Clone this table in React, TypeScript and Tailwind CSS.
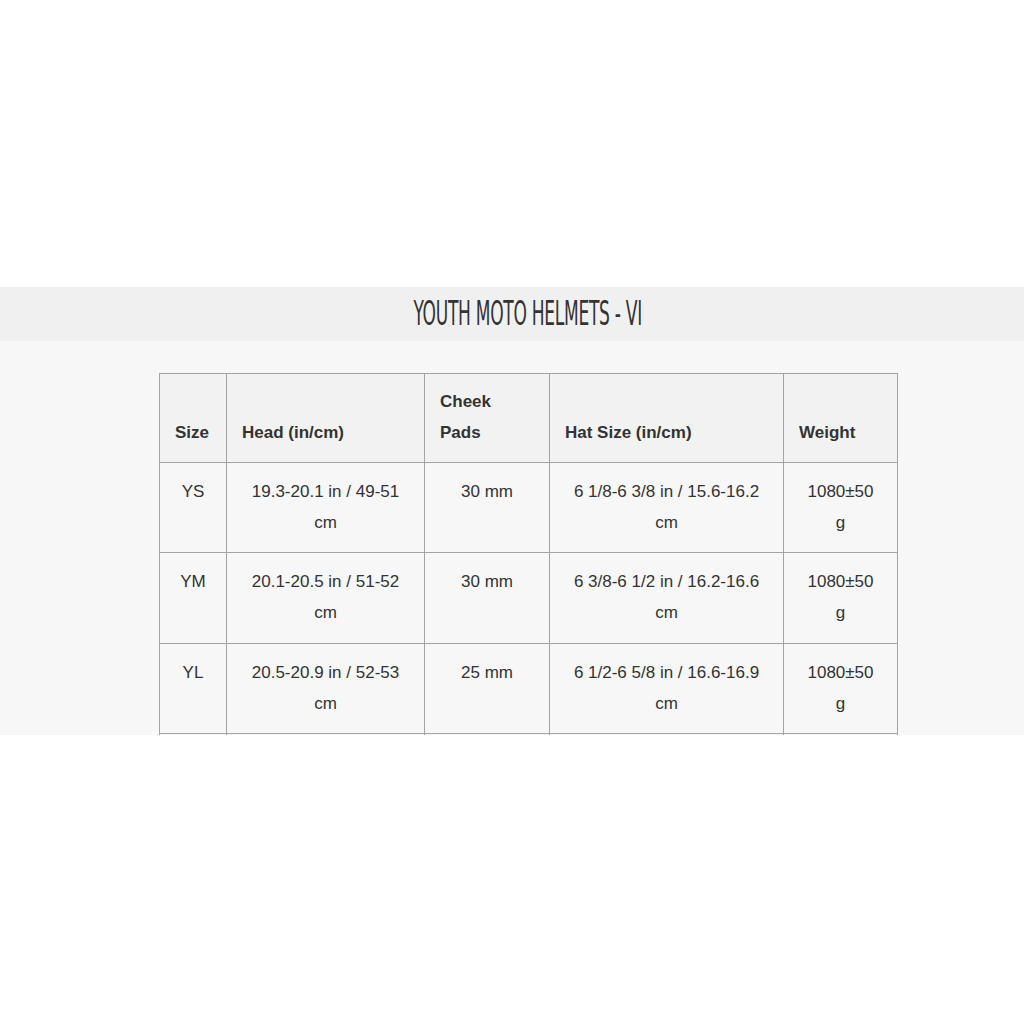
const rows = [
  { size: "YS", head: "19.3-20.1 in / 49-51 cm", cheek: "30 mm", hat: "6 1/8-6 3/8 in / 15.6-16.2 cm", weight: "1080±50 g" },
  { size: "YM", head: "20.1-20.5 in / 51-52 cm", cheek: "30 mm", hat: "6 3/8-6 1/2 in / 16.2-16.6 cm", weight: "1080±50 g" },
  { size: "YL", head: "20.5-20.9 in / 52-53 cm", cheek: "25 mm", hat: "6 1/2-6 5/8 in / 16.6-16.9 cm", weight: "1080±50 g" },
];

const th = "border border-[#a3a3a3] px-[15px] pt-[12px] pb-[14px] text-left align-bottom font-bold";
const td = "border border-[#a3a3a3] px-[15px] pt-[13px] pb-[14.4px] text-center align-top font-normal";
const tdWeight = "border border-[#a3a3a3] px-[20px] pt-[13px] pb-[14.4px] text-center align-top font-normal";

export default function App() {
  return (
    <div className="min-h-[1024px] bg-white pt-[287px] font-['Liberation_Sans',Arial,sans-serif] text-[#333]">
      <div className="flex h-[54px] items-center justify-center overflow-hidden bg-[#f0f0f0] pl-[32px]">
        <h2 className="inline-block origin-center scale-x-[0.575] whitespace-nowrap font-['DejaVu_Sans_Condensed','DejaVu_Sans',sans-serif] text-[33px] font-medium tracking-[-0.5px] text-[#333]">
          YOUTH MOTO HELMETS - VI
        </h2>
      </div>
      <div className="h-[394px] overflow-hidden bg-[#f7f7f7] pt-[32px]">
        <table className="ml-[159px] w-[738px] table-fixed border-collapse text-[17px] leading-[31px]">
          <colgroup>
            <col className="w-[67px]" />
            <col className="w-[198px]" />
            <col className="w-[125px]" />
            <col className="w-[234px]" />
            <col className="w-[114px]" />
          </colgroup>
          <thead>
            <tr className="bg-[#f2f2f2]">
              <th className={th}>Size</th>
              <th className={th}>Head (in/cm)</th>
              <th className={th}>Cheek Pads</th>
              <th className={th}>Hat Size (in/cm)</th>
              <th className={th}>Weight</th>
            </tr>
          </thead>
          <tbody>
            {rows.map((r) => (
              <tr key={r.size}>
                <td className={td}>{r.size}</td>
                <td className={td}>{r.head}</td>
                <td className={td}>{r.cheek}</td>
                <td className={td}>{r.hat}</td>
                <td className={tdWeight}>{r.weight}</td>
              </tr>
            ))}
            <tr className="h-[40px]">
              <td className="border border-[#a3a3a3]" />
              <td className="border border-[#a3a3a3]" />
              <td className="border border-[#a3a3a3]" />
              <td className="border border-[#a3a3a3]" />
              <td className="border border-[#a3a3a3]" />
            </tr>
          </tbody>
        </table>
      </div>
    </div>
  );
}
